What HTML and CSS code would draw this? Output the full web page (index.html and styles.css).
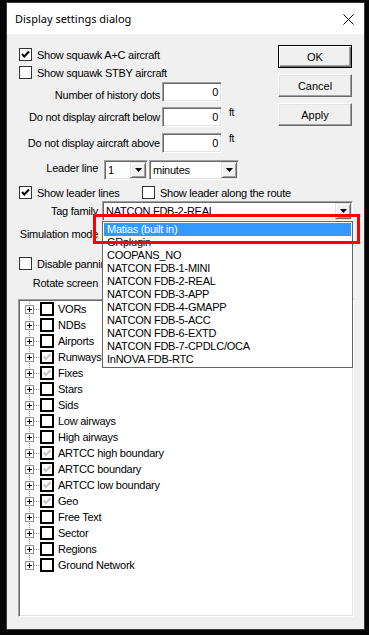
FILE: index.html
```html
<!DOCTYPE html>
<html lang="en">
<head>
    <meta charset="UTF-8">
    <meta name="viewport" content="width=device-width, initial-scale=1.0">
    <title>Display settings dialog</title>
    <link rel="stylesheet" href="styles.css">
</head>
<body>

    <div class="dialog">
        <div class="titlebar">
            <span class="title">Display settings dialog</span>
            <svg class="close" width="11" height="11" viewBox="0 0 11 11">
                <path d="M0.5 0.5 L10.5 10.5 M10.5 0.5 L0.5 10.5" stroke="#000" stroke-width="1" fill="none"/>
            </svg>
        </div>

        <div class="client">
            <div class="top">
                <div class="left">
                    <div class="check-row">
                        <span class="cb"><svg width="11" height="11" viewBox="0 0 11 11"><path d="M2 5 L4.3 7.5 L9 2.5" stroke="#000" stroke-width="2" fill="none"/></svg></span>
                        <span>Show squawk A+C aircraft</span>
                    </div>
                    <div class="check-row gap5">
                        <span class="cb"></span>
                        <span>Show squawk STBY aircraft</span>
                    </div>
                    <div class="field gap3">
                        <span class="field-label low">Number of history dots</span>
                        <span class="edit">0</span>
                    </div>
                    <div class="field gap5">
                        <span class="field-label">Do not display aircraft below</span>
                        <span class="edit">0</span>
                        <span class="unit">ft</span>
                    </div>
                    <div class="field gap6">
                        <span class="field-label">Do not display aircraft above</span>
                        <span class="edit">0</span>
                        <span class="unit">ft</span>
                    </div>
                </div>
                <div class="buttons">
                    <button class="btn default">OK</button>
                    <button class="btn">Cancel</button>
                    <button class="btn">Apply</button>
                </div>
            </div>

            <div class="row leader">
                <span class="short-label">Leader line</span>
                <span class="combo c-num"><span class="combo-text">1</span><span class="arrow"><svg width="7" height="4" viewBox="0 0 7 4"><polygon points="0,0 7,0 3.5,4" fill="#000"/></svg></span></span>
                <span class="combo c-unit"><span class="combo-text">minutes</span><span class="arrow"><svg width="7" height="4" viewBox="0 0 7 4"><polygon points="0,0 7,0 3.5,4" fill="#000"/></svg></span></span>
            </div>

            <div class="check-row show-leader">
                <span class="pair">
                    <span class="cb"><svg width="11" height="11" viewBox="0 0 11 11"><path d="M2 5 L4.3 7.5 L9 2.5" stroke="#000" stroke-width="2" fill="none"/></svg></span>
                    <span>Show leader lines</span>
                </span>
                <span class="cb"></span>
                <span>Show leader along the route</span>
            </div>

            <div class="row tag">
                <span class="short-label">Tag family</span>
                <span class="combo c-wide"><span class="combo-text">NATCON FDB-2-REAL</span><span class="arrow"><svg width="7" height="4" viewBox="0 0 7 4"><polygon points="0,0 7,0 3.5,4" fill="#000"/></svg></span></span>
            </div>

            <div class="row sim">
                <span class="short-label">Simulation mode</span>
            </div>

            <div class="check-row pan">
                <span class="cb"></span>
                <span class="cut">Disable panning</span>
            </div>

            <div class="row rotate">
                <span class="short-label">Rotate screen</span>
            </div>

            <div class="tree">
                <div class="tree-items">
                    <div class="node"><span class="plus"></span><span class="branch"></span><span class="tcb"></span><span>VORs</span></div>
                    <div class="node"><span class="plus"></span><span class="branch"></span><span class="tcb"></span><span>NDBs</span></div>
                    <div class="node"><span class="plus"></span><span class="branch"></span><span class="tcb"></span><span>Airports</span></div>
                    <div class="node"><span class="plus"></span><span class="branch"></span><span class="tcb on"></span><span>Runways</span></div>
                    <div class="node"><span class="plus"></span><span class="branch"></span><span class="tcb on"></span><span>Fixes</span></div>
                    <div class="node"><span class="plus"></span><span class="branch"></span><span class="tcb"></span><span>Stars</span></div>
                    <div class="node"><span class="plus"></span><span class="branch"></span><span class="tcb"></span><span>Sids</span></div>
                    <div class="node"><span class="plus"></span><span class="branch"></span><span class="tcb"></span><span>Low airways</span></div>
                    <div class="node"><span class="plus"></span><span class="branch"></span><span class="tcb"></span><span>High airways</span></div>
                    <div class="node"><span class="plus"></span><span class="branch"></span><span class="tcb on"></span><span>ARTCC high boundary</span></div>
                    <div class="node"><span class="plus"></span><span class="branch"></span><span class="tcb on"></span><span>ARTCC boundary</span></div>
                    <div class="node"><span class="plus"></span><span class="branch"></span><span class="tcb on"></span><span>ARTCC low boundary</span></div>
                    <div class="node"><span class="plus"></span><span class="branch"></span><span class="tcb on"></span><span>Geo</span></div>
                    <div class="node"><span class="plus"></span><span class="branch"></span><span class="tcb"></span><span>Free Text</span></div>
                    <div class="node"><span class="plus"></span><span class="branch"></span><span class="tcb"></span><span>Sector</span></div>
                    <div class="node"><span class="plus"></span><span class="branch"></span><span class="tcb"></span><span>Regions</span></div>
                    <div class="node"><span class="plus"></span><span class="branch"></span><span class="tcb"></span><span>Ground Network</span></div>
                </div>
            </div>

            <ul class="droplist">
                <li class="selected">Matias (built in)</li>
                <li>GRplugin</li>
                <li>COOPANS_NO</li>
                <li>NATCON FDB-1-MINI</li>
                <li>NATCON FDB-2-REAL</li>
                <li>NATCON FDB-3-APP</li>
                <li>NATCON FDB-4-GMAPP</li>
                <li>NATCON FDB-5-ACC</li>
                <li>NATCON FDB-6-EXTD</li>
                <li>NATCON FDB-7-CPDLC/OCA</li>
                <li>InNOVA FDB-RTC</li>
            </ul>

            <div class="callout"></div>
        </div>
    </div>

</body>
</html>
```

FILE: styles.css
```css
body {
    margin: 0;
    background: #050505;
    width: 369px;
    height: 635px;
    overflow: hidden;
}
.dialog {
    margin: 2px 0 0 6px;
    width: 357px;
    height: 626px;
    border: 1px solid #3a3a3a;
}
.titlebar {
    height: 31px;
    background: #fff;
    display: flex;
    align-items: center;
    justify-content: space-between;
    padding: 0 10px 0 8px;
}
.title {
    font-family: "Noto Sans", sans-serif;
    font-size: 11px;
    color: #000;
}
.close {
    display: block;
    margin-top: 1px;
}
.client {
    position: relative;
    height: 595px;
    background: #f0f0f0;
    font-family: "Liberation Sans", Arial, sans-serif;
    font-size: 11px;
    letter-spacing: -0.25px;
    color: #000;
}

/* top block: fields on the left, buttons on the right */
.top {
    display: flex;
    align-items: flex-start;
    height: 119px;
}
.left {
    flex: 1;
    padding-top: 14px;
}
.buttons {
    display: flex;
    flex-direction: column;
    gap: 6px;
    width: 74px;
    margin: 11px 12px 0 0;
}
.btn {
    height: 23px;
    width: 74px;
    box-sizing: border-box;
    font: inherit;
    letter-spacing: 0;
    color: #000;
    background: #f0f0f0;
    border: 1px solid;
    border-color: #fff #696969 #696969 #fff;
    box-shadow: inset -1px -1px #a0a0a0, inset 1px 1px #e3e3e3;
    padding: 0;
}
.btn.default {
    border-color: #000;
    box-shadow: inset 1px 1px #fff, inset -1px -1px #696969, inset -2px -2px #a0a0a0;
}

.check-row {
    display: flex;
    align-items: center;
    height: 13px;
    padding-left: 12px;
}
.cb {
    width: 13px;
    height: 13px;
    box-sizing: border-box;
    border: 1px solid #333;
    background: #fff;
    margin-right: 5px;
    display: flex;
    align-items: center;
    justify-content: center;
    flex-shrink: 0;
}
.cb svg {
    display: block;
}
.pair {
    display: flex;
    align-items: center;
    width: 123px;
}
.cut {
    width: 65px;
    overflow: hidden;
    white-space: nowrap;
}
.gap3 { margin-top: 3px; }
.gap5 { margin-top: 5px; }
.gap6 { margin-top: 6px; }

.field {
    display: flex;
    align-items: center;
    height: 20px;
}
.field-label {
    width: 153px;
    text-align: right;
    margin-right: 2px;
    white-space: nowrap;
}
.field-label.low {
    align-self: flex-end;
    line-height: 13px;
}
.edit {
    width: 60px;
    height: 20px;
    box-sizing: border-box;
    background: #fff;
    border: 1px solid;
    border-color: #a0a0a0 #fff #fff #a0a0a0;
    box-shadow: inset 1px 1px #696969, inset -1px -1px #e3e3e3;
    text-align: right;
    padding-right: 3px;
    line-height: 18px;
}
.unit {
    align-self: flex-start;
    margin-left: 7px;
    line-height: 11px;
    font-size: 10px;
}

.row {
    display: flex;
    align-items: center;
    height: 20px;
}
.short-label {
    width: 91px;
    text-align: right;
    white-space: nowrap;
}
.leader {
    margin-top: 7px;
}
.leader .short-label {
    margin-top: -4px;
}
.combo {
    height: 20px;
    box-sizing: border-box;
    background: #fff;
    border: 1px solid;
    border-color: #a0a0a0 #fff #fff #a0a0a0;
    box-shadow: inset 1px 1px #696969, inset -1px -1px #e3e3e3;
    display: flex;
    align-items: center;
    padding: 1px;
}
.combo-text {
    flex: 1;
    padding-left: 2px;
    white-space: nowrap;
    overflow: hidden;
}
.arrow {
    width: 16px;
    height: 16px;
    box-sizing: border-box;
    background: #f0f0f0;
    border: 1px solid;
    border-color: #e3e3e3 #696969 #696969 #e3e3e3;
    box-shadow: inset 1px 1px #fff, inset -1px -1px #a0a0a0;
    display: flex;
    align-items: center;
    justify-content: center;
}
.arrow svg {
    display: block;
}
.c-num {
    width: 44px;
    margin-left: 6px;
}
.c-unit {
    width: 90px;
    margin-left: 1px;
}
.c-wide {
    width: 251px;
    margin-left: 4px;
}
.show-leader {
    margin-top: 6px;
}
.tag {
    margin-top: 2px;
}
.sim {
    margin-top: 3px;
}
.pan {
    margin-top: 13px;
}
.rotate {
    margin-top: 3px;
}

/* tree of map items */
.tree {
    margin: 6px 0 0 11px;
    width: 336px;
    height: 318px;
    box-sizing: border-box;
    background: #fff;
    border: 1px solid;
    border-color: #a0a0a0 #fff #fff #a0a0a0;
    box-shadow: inset 1px 1px #696969, inset -1px -1px #e3e3e3;
    padding: 1px 0 0 1px;
}
.tree-items {
    background-image: repeating-linear-gradient(to bottom, #a0a0a0 0 1px, transparent 1px 2px);
    background-size: 1px calc(100% - 8px);
    background-position: 9px 0;
    background-repeat: no-repeat;
}
.node {
    display: flex;
    align-items: center;
    height: 16px;
    padding-left: 5px;
}
.plus {
    position: relative;
    width: 9px;
    height: 9px;
    box-sizing: border-box;
    border: 1px solid #919191;
    background: #fff;
    flex-shrink: 0;
}
.plus::before,
.plus::after {
    content: "";
    position: absolute;
    background: #000;
}
.plus::before {
    left: 1px;
    top: 3px;
    width: 5px;
    height: 1px;
}
.plus::after {
    left: 3px;
    top: 1px;
    width: 1px;
    height: 5px;
}
.branch {
    width: 6px;
    height: 1px;
    background-image: repeating-linear-gradient(to right, #a0a0a0 0 1px, transparent 1px 2px);
}
.tcb {
    width: 14px;
    height: 14px;
    box-sizing: border-box;
    border: 2px solid #000;
    background: #fff;
    margin-right: 4px;
    flex-shrink: 0;
}
.tcb.on {
    background: #fff url("data:image/svg+xml,%3Csvg xmlns='http://www.w3.org/2000/svg' width='10' height='10' viewBox='0 0 10 10'%3E%3Cpath d='M1.5 4.5 L4 7 L8.5 2' stroke='%23c4c4c4' stroke-width='2' fill='none'/%3E%3C/svg%3E") center no-repeat;
}

/* opened tag family list */
.droplist {
    position: absolute;
    left: 95px;
    top: 187px;
    width: 251px;
    box-sizing: border-box;
    margin: 0;
    padding: 1px;
    list-style: none;
    background: #fff;
    border: 1px solid #646464;
}
.droplist li {
    height: 13px;
    line-height: 13px;
    padding-left: 3px;
    white-space: nowrap;
}
.droplist li.selected {
    background: #3399ff;
    color: #fff;
}
.callout {
    position: absolute;
    left: 86px;
    top: 180px;
    width: 267px;
    height: 30px;
    box-sizing: border-box;
    border: 3px solid #ff0000;
}
```
